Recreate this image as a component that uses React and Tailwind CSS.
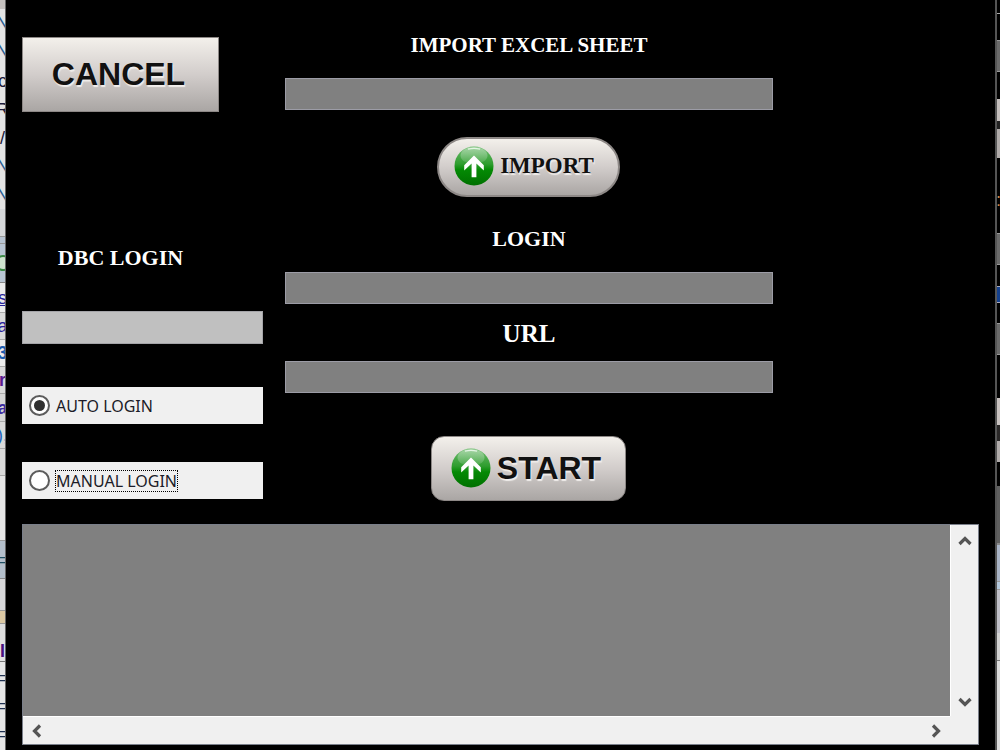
import React, { useState } from "react";
import clsx from "clsx";

// Slices of the windows that peek out on either side of the dialog
const leftSlices = [
  { box: "h-[9px] bg-[#c4c0be]" },
  { box: "h-[27px] bg-[#e4e4e4]", text: "N", tone: "text-[#2c5f92]" },
  { box: "h-[30px] bg-[#e4e4e4]", text: "N", tone: "text-[#2c5f92]" },
  { box: "h-[30px] bg-[#e4e4e4]", text: "c", tone: "text-[#1a1a3a]" },
  { box: "h-[28px] bg-[#e4e4e4]", text: "R", tone: "text-[#1a1a3a]" },
  { box: "h-[28px] bg-[#e4e4e4]", text: "/", tone: "text-[#1a1a3a]" },
  { box: "h-[28px] bg-[#e4e4e4]", text: "N", tone: "text-[#2c5f92]" },
  { box: "h-[29px] bg-[#e4e4e4]", text: "N", tone: "text-[#2c5f92]" },
  { box: "h-[28px] bg-[#d6d8da] border-b border-[#999]" },
  { box: "h-[7px] bg-[#b7c4d2] border-b border-[#999]" },
  { box: "h-[39px] bg-[#b9c6d4] border-b border-[#888]", ring: true },
  { box: "h-[30px] bg-[#ececec] border-b border-[#aaa]", text: "s", tone: "text-[#26209a] underline" },
  { box: "h-[27px] bg-[#dadada] border-b border-[#aaa]", text: "a", tone: "text-[#26209a]" },
  { box: "h-[27px] bg-[#ececec] border-b border-[#aaa]", text: "3", tone: "text-[#1c5cb0] font-bold" },
  { box: "h-[27px] bg-[#dadada] border-b border-[#aaa]", text: "r", tone: "text-[#5a1a90] font-bold" },
  { box: "h-[28px] bg-[#d6d6d6] border-b border-[#aaa]", text: "a", tone: "text-[#3a2aa0] font-bold" },
  { box: "h-[27px] bg-[#dadada] border-b border-[#aaa]", text: "),", tone: "text-[#1c66c0]" },
  { box: "h-[27px] bg-[#dadada] border-b border-[#aaa]" },
  { box: "h-[65px] bg-[#e6e6e6] border-b border-[#999]" },
  { box: "h-[38px] bg-[#b4bfcb] border-b border-[#888]", text: "=", tone: "text-[#1d4e63]" },
  { box: "h-[32px] bg-[#d8d8da] border-b border-[#999]" },
  { box: "h-[13px] bg-[#dcc9a4] border-b border-[#999]" },
  { box: "h-[16px] bg-[#dedede]" },
  { box: "h-[22px] bg-[#e2e2e2] border-b border-[#777]", text: "I", tone: "text-[#4a1080] font-bold" },
  { box: "h-[32px] bg-[#e6e6e6]", text: "=", tone: "text-[#1e3050]" },
  { box: "h-[24px] bg-[#e6e6e6]", text: "=", tone: "text-[#1e3050]" },
  { box: "flex-1 bg-[#e6e6e6]", text: "=", tone: "text-[#1e3050]" },
];

const rightSlices = [
  { box: "h-[14px] bg-black border-b border-[#aaa]" },
  { box: "h-[26px] bg-black" },
  { box: "h-[32px] bg-[#6b6b6b] border-y border-[#999]" },
  { box: "h-[27px] bg-black" },
  { box: "h-[22px] bg-[#c5bfbd]" },
  { box: "h-[8px] bg-[#222]" },
  { box: "h-[29px] bg-[#b0abaa]" },
  { box: "h-[34px] bg-black" },
  { box: "h-[16px] bg-black", text: ":", tone: "text-[#c98a50]" },
  { box: "h-[25px] bg-black" },
  { box: "h-[32px] bg-[#6b6b6b] border-y border-[#999]" },
  { box: "h-[21px] bg-black" },
  { box: "h-[17px] bg-[#14408c] border-y border-[#aab]" },
  { box: "h-[20px] bg-black" },
  { box: "h-[32px] bg-[#6b6b6b] border-y border-[#999]" },
  { box: "h-[43px] bg-black" },
  { box: "h-[27px] bg-[#c8c2c0]" },
  { box: "h-[16px] bg-[#2a2828]" },
  { box: "h-[21px] bg-[#b0abaa]" },
  { box: "h-[24px] bg-black" },
  { box: "h-[57px] bg-[#5f5f5f]" },
  { box: "h-[38px] bg-[#a9b4c6] border-t-2 border-[#888]" },
  { box: "h-[9px] bg-[#b3c8dc] border-y border-[#999]" },
  { box: "h-[43px] bg-[#c0c0c8]" },
  { box: "h-[28px] bg-[#d2d2d2] border-b border-[#777]" },
  { box: "flex-1 bg-[#dcdcdc]" },
];

const fieldClass = "block h-8 w-full border border-[#9c9ca6] bg-[#808080] px-2 outline-none";
const titleClass = "text-center font-['Liberation_Serif',serif] font-bold leading-6 text-white";
const metalClass =
  "flex items-center justify-center border border-[#8d8886] bg-linear-to-b from-[#f3f0eb] via-[#d2cdcb] to-[#aaa6a4] text-[#111] [text-shadow:1px_2px_1px_#f1eeec]";

function Backdrop({ slices, className }) {
  return (
    <div aria-hidden="true" className={clsx("flex shrink-0 flex-col overflow-hidden", className)}>
      {slices.map((slice, i) => (
        <div
          key={i}
          className={clsx("flex shrink-0 items-center justify-center overflow-hidden text-[18px] leading-5", slice.box)}
        >
          {slice.text && <span className={slice.tone}>{slice.text}</span>}
          {slice.ring && <span className="size-4 shrink-0 rounded-full border-2 border-[#3c8a45] bg-[#cfe3cf]" />}
        </div>
      ))}
    </div>
  );
}

function UpArrowBall() {
  return (
    <svg viewBox="0 0 40 40" className="size-10 shrink-0" aria-hidden="true">
      <defs>
        <linearGradient id="ball" x1="0" y1="0" x2="0" y2="1">
          <stop offset="0" stopColor="#6dbb6d" />
          <stop offset="0.45" stopColor="#2f9d2f" />
          <stop offset="0.6" stopColor="#048a04" />
          <stop offset="1" stopColor="#007000" />
        </linearGradient>
        <linearGradient id="gloss" x1="0" y1="0" x2="0" y2="1">
          <stop offset="0" stopColor="#fff" stopOpacity="0.4" />
          <stop offset="1" stopColor="#fff" stopOpacity="0.1" />
        </linearGradient>
      </defs>
      <circle cx="20" cy="20" r="19.5" fill="url(#ball)" />
      <ellipse cx="20" cy="9.5" rx="13.5" ry="8.5" fill="url(#gloss)" />
      <path d="M14 3.2Q20 1.6 26 3.2" fill="none" stroke="#e4f5e4" strokeWidth="1.2" />
      <path d="M20 9.5L29.8 19.3V24.6L22.4 17.6V31.2H17.6V17.6L10.2 24.6V19.3Z" fill="#fff" />
    </svg>
  );
}

function ScrollButton({ label, d }) {
  return (
    <button type="button" aria-label={label} className="flex size-7 items-center justify-center">
      <svg viewBox="0 0 14 14" className="size-[14px]">
        <path d={d} fill="none" stroke="#555" strokeWidth="3.2" />
      </svg>
    </button>
  );
}

function LoginOption({ value, label, mode, onChange, focused }) {
  return (
    <label className="flex h-[37px] w-full items-center gap-[6px] bg-[#f0f0f0] pl-[7px] font-['Noto_Sans',sans-serif] text-base text-[#1c1c28]">
      <input
        type="radio"
        name="mode"
        value={value}
        checked={mode === value}
        onChange={() => onChange(value)}
        className="flex size-[21px] shrink-0 appearance-none items-center justify-center rounded-full border-2 border-[#5c5c5c] bg-white checked:before:size-[11px] checked:before:rounded-full checked:before:bg-[#303030] checked:before:content-['']"
      />
      <span className={clsx("leading-5", focused && "outline outline-1 outline-dotted outline-black")}>{label}</span>
    </label>
  );
}

export default function App() {
  const [mode, setMode] = useState("auto");

  return (
    <div className="flex min-h-screen bg-black font-['Liberation_Sans',sans-serif]">
      <Backdrop slices={leftSlices} className="w-[6px] border-r border-[#666]" />

      <main className="flex min-w-0 flex-1 flex-col px-4 pb-[5px]">
        <div className="grid h-[524px] grid-cols-[241fr_488fr_184fr] gap-[22px]">
          {/* Left column */}
          <div className="pt-[37px]">
            <div className="w-[197px]">
              <button type="button" className={clsx(metalClass, "h-[75px] w-full pr-1 pb-0.5 text-[32px] font-bold")}>
                CANCEL
              </button>
              <h2 className={clsx(titleClass, "mt-[134px] text-[22px]")}>
                <label htmlFor="dbc">DBC LOGIN</label>
              </h2>
            </div>
            <input
              id="dbc"
              type="text"
              className="mt-[41px] block h-[33px] w-full border border-[#a4a4a8] bg-[#c0c0c0] px-2 outline-none"
            />
            <div className="mt-[43px] flex flex-col gap-[38px]">
              <LoginOption value="auto" label="AUTO LOGIN" mode={mode} onChange={setMode} />
              <LoginOption value="manual" label="MANUAL LOGIN" mode={mode} onChange={setMode} focused />
            </div>
          </div>

          {/* Middle column */}
          <div className="flex flex-col items-center pt-[33px]">
            <label htmlFor="sheet" className={clsx(titleClass, "text-[21px]")}>
              IMPORT EXCEL SHEET
            </label>
            <input id="sheet" type="text" className={clsx(fieldClass, "mt-[21px]")} />
            <button
              type="button"
              className={clsx(
                metalClass,
                "mt-[27px] mr-0.5 h-[60px] w-[183px] gap-[6px] rounded-full border-2 pr-2 pb-0.5 font-['Liberation_Serif',serif] text-[23px] font-bold"
              )}
            >
              <UpArrowBall />
              IMPORT
            </button>

            <label htmlFor="login" className={clsx(titleClass, "mt-[30px] text-[22px]")}>
              LOGIN
            </label>
            <input id="login" type="text" className={clsx(fieldClass, "mt-[21px]")} />

            <label htmlFor="url" className={clsx(titleClass, "mt-[18px] text-[25px]")}>
              URL
            </label>
            <input id="url" type="text" className={clsx(fieldClass, "mt-[15px]")} />
            <button
              type="button"
              className={clsx(
                metalClass,
                "mt-[43px] mr-0.5 h-[65px] w-[195px] gap-[6px] rounded-[13px] pr-1 pb-0.5 text-[32px] font-bold"
              )}
            >
              <UpArrowBall />
              START
            </button>
          </div>
        </div>

        {/* Log output with its scroll bars */}
        <div className="grid min-h-[221px] flex-1 grid-cols-[1fr_28px] grid-rows-[1fr_28px] border border-[#7a7f8a] bg-[#f0f0f0]">
          <textarea aria-label="Log" className="block size-full resize-none bg-[#808080] p-1 outline-none" />
          <div className="flex flex-col justify-between border-l border-white pt-0.5">
            <ScrollButton label="Scroll up" d="M1.5 10L7 4.5L12.5 10" />
            <ScrollButton label="Scroll down" d="M1.5 4L7 9.5L12.5 4" />
          </div>
          <div className="flex justify-between border-t border-white">
            <ScrollButton label="Scroll left" d="M10 1.5L4.5 7L10 12.5" />
            <ScrollButton label="Scroll right" d="M4 1.5L9.5 7L4 12.5" />
          </div>
        </div>
      </main>

      <Backdrop slices={rightSlices} className="w-[5px] border-l-2 border-[#555]" />
    </div>
  );
}
